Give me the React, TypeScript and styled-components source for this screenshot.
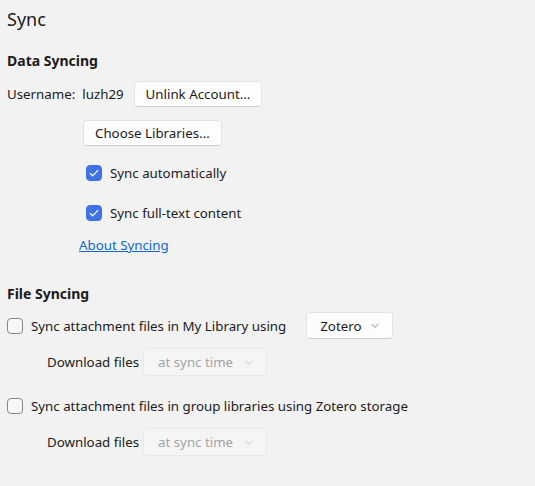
import React from "react";
import styled, { createGlobalStyle } from "styled-components";

const GlobalStyle = createGlobalStyle`
  html, body { margin: 0; padding: 0; background: #f2f2f2; }
  body {
    font-family: "Noto Sans", "Open Sans", sans-serif;
    font-size: 13.3px;
    color: #1b1b1b;
  }
`;

const Page = styled.div`
  padding: 8px 7px 0 7px;
  display: flex;
  flex-direction: column;
`;

const Title = styled.h1`
  margin: 0;
  font-size: 18px;
  font-weight: 400;
  line-height: 22px;
  height: 22px;
`;

const SectionTitle = styled.h2<{ $top: number }>`
  margin: ${(p) => p.$top}px 0 0 0;
  font-size: 14px;
  font-weight: 700;
  line-height: 20px;
  height: 20px;
`;

const Row = styled.div<{ $top: number; $indent?: number; $height?: number }>`
  display: flex;
  align-items: center;
  margin-top: ${(p) => p.$top}px;
  margin-left: ${(p) => p.$indent ?? 0}px;
  height: ${(p) => p.$height ?? 27}px;
`;

const Label = styled.span<{ $gap?: number }>`
  margin-right: ${(p) => p.$gap ?? 0}px;
  white-space: nowrap;
`;

const Button = styled.button`
  font: inherit;
  color: #1b1b1b;
  background: #fdfdfd;
  border: 1px solid #e3e3e3;
  border-bottom-color: #cfcfcf;
  border-radius: 4px;
  height: 26px;
  padding: 0 11px;
  display: inline-flex;
  align-items: center;
`;

const Select = styled.div<{ $disabled?: boolean }>`
  display: inline-flex;
  align-items: center;
  box-sizing: border-box;
  height: ${(p) => (p.$disabled ? 28 : 27)}px;
  padding: 0 ${(p) => (p.$disabled ? 13 : 13)}px 0 ${(p) => (p.$disabled ? 14 : 13)}px;
  gap: ${(p) => (p.$disabled ? 12 : 10)}px;
  border-radius: 4px;
  border: 1px solid ${(p) => (p.$disabled ? "#e8e8e8" : "#e3e3e3")};
  border-bottom-color: ${(p) => (p.$disabled ? "#e8e8e8" : "#cfcfcf")};
  background: ${(p) => (p.$disabled ? "#f5f5f5" : "#fdfdfd")};
  color: ${(p) => (p.$disabled ? "#a3a3a3" : "#1b1b1b")};
  white-space: nowrap;
`;

const Box = styled.span<{ $checked?: boolean }>`
  box-sizing: border-box;
  width: 16px;
  height: 16px;
  border-radius: 4px;
  flex: none;
  display: inline-flex;
  align-items: center;
  justify-content: center;
  background: ${(p) => (p.$checked ? "#3f72e5" : "#f7f7f7")};
  border: 1px solid ${(p) => (p.$checked ? "#3f72e5" : "#858585")};
  margin-right: 8px;
`;

const Link = styled.a`
  color: #0f67cf;
  text-decoration: underline;
  cursor: pointer;
`;

const Chevron = ({ color }: { color: string }) => (
  <svg width="8" height="5" viewBox="0 0 8 5" fill="none">
    <path d="M0.5 1 L4 4.3 L7.5 1" stroke={color} strokeWidth="1" />
  </svg>
);

const Check = () => (
  <svg width="10" height="8" viewBox="0 0 10 8" fill="none">
    <path d="M1 4.2 L3.7 6.8 L9 1.2" stroke="#ffffff" strokeWidth="1.2" />
  </svg>
);

const Checkbox = ({ checked, label }: { checked?: boolean; label: string }) => (
  <>
    <Box $checked={checked}>{checked && <Check />}</Box>
    <Label>{label}</Label>
  </>
);

export default function App() {
  return (
    <>
      <GlobalStyle />
      <Page>
        <Title>Sync</Title>
        <SectionTitle $top={21}>Data Syncing</SectionTitle>
        <Row $top={10} $height={26}>
          <Label $gap={7}>Username:</Label>
          <Label $gap={10}>luzh29</Label>
          <Button>Unlink Account...</Button>
        </Row>
        <Row $top={12} $indent={76} $height={27}>
          <Button>Choose Libraries...</Button>
        </Row>
        <Row $top={15} $indent={79} $height={24}>
          <Checkbox checked label="Sync automatically" />
        </Row>
        <Row $top={16} $indent={79} $height={24}>
          <Checkbox checked label="Sync full-text content" />
        </Row>
        <Row $top={10} $indent={72} $height={20}>
          <Link>About Syncing</Link>
        </Row>
        <SectionTitle $top={29}>File Syncing</SectionTitle>
        <Row $top={8} $height={27}>
          <Checkbox label="Sync attachment files in My Library using" />
          <Label $gap={20} />
          <Select>
            Zotero
            <Chevron color="#8a8a8a" />
          </Select>
        </Row>
        <Row $top={9} $indent={40} $height={28}>
          <Label $gap={4}>Download files</Label>
          <Select $disabled>
            at sync time
            <Chevron color="#c4c4c4" />
          </Select>
        </Row>
        <Row $top={16} $height={27}>
          <Checkbox label="Sync attachment files in group libraries using Zotero storage" />
        </Row>
        <Row $top={9} $indent={40} $height={28}>
          <Label $gap={4}>Download files</Label>
          <Select $disabled>
            at sync time
            <Chevron color="#c4c4c4" />
          </Select>
        </Row>
      </Page>
    </>
  );
}
